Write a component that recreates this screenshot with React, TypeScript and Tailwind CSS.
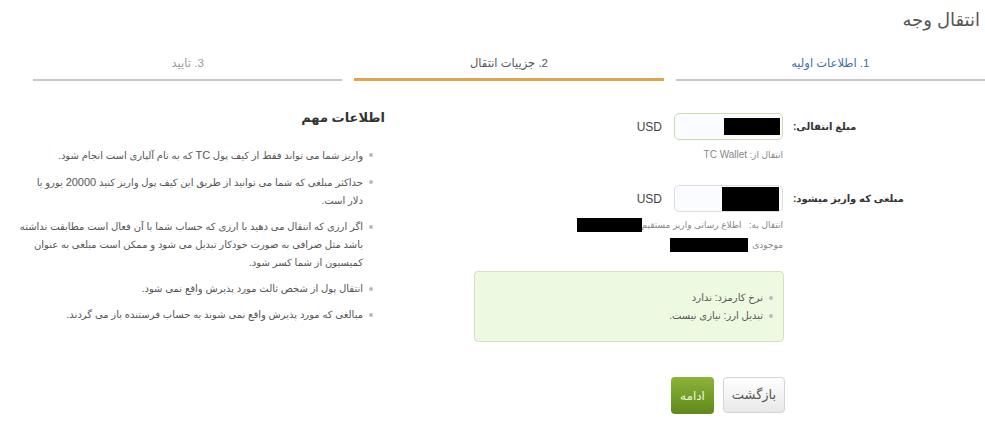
import React from "react";

function Bullet({ children, nowrap }: { children: React.ReactNode; nowrap?: boolean }) {
  return (
    <li className="flex items-start gap-[6px]">
      <span className="mt-[7px] w-[4px] h-[4px] rounded-full bg-[#bbbbbb] shrink-0" />
      <span className={nowrap ? "whitespace-nowrap" : ""}>{children}</span>
    </li>
  );
}

export default function App() {
  return (
    <div
      dir="rtl"
      className="w-[985px] h-[426px] bg-white text-[#555] overflow-hidden font-['Liberation_Sans','DejaVu_Sans',sans-serif]"
    >
      <h1 className="pr-[5px] pt-[8px] text-[18px] leading-[24px] text-[#555] font-normal">انتقال وجه</h1>

      <div className="grid grid-cols-3 gap-3 ml-[33px] mt-[23px] text-[11.5px] leading-[16px]">
        <div className="text-center pb-[8px] border-b-2 border-[#c8c8c8] text-[#3a6ea5]">1. اطلاعات اولیه</div>
        <div className="text-center pb-[7px] border-b-[3px] border-[#e3a445] text-[#555]">2. جزییات انتقال</div>
        <div className="text-center pb-[8px] border-b-2 border-[#c8c8c8] text-[#999]">3. تایید</div>
      </div>

      <div className="flex justify-between pl-[30px] mt-[27px]">
        {/* form */}
        <div className="w-[515px] pt-[5px]">
          <div className="flex items-center h-[27px]">
            <div className="w-[192px] text-left font-bold text-[10px] text-[#333]">مبلغ انتقالی:</div>
            <div className="mr-[10px] w-[109px] h-[27px] rounded-[5px] border border-[#cfdcb0] bg-[#fafcff] flex items-center pr-[2px]">
              <div className="w-[56px] h-[17px] bg-black" />
            </div>
            <div className="mr-[12px] text-[12px] text-[#444]">USD</div>
          </div>
          <div className="mr-[202px] mt-[8px] text-[9px] leading-[14px] text-[#888]">
            انتقال از: <span dir="ltr" className="text-[10px]">TC Wallet</span>
          </div>

          <div className="flex items-center h-[27px] mt-[23px]">
            <div className="w-[192px] text-left font-bold text-[10px] text-[#333]">مبلغی که واریز میشود:</div>
            <div className="mr-[10px] w-[109px] h-[27px] rounded-[5px] border border-[#dddddd] bg-[#fafcff] flex items-center pr-[3px]">
              <div className="w-[57px] h-[24px] bg-black" />
            </div>
            <div className="mr-[12px] text-[12px] text-[#444]">USD</div>
          </div>
          <div className="mr-[202px] mt-[6px] flex items-center text-[9px] leading-[14px] text-[#888]">
            <span>انتقال به:&nbsp;&nbsp; اطلاع رسانی واریز مستقیم</span>
            <span className="w-[65px] h-[14px] bg-black" />
          </div>
          <div className="mr-[202px] mt-[6px] flex items-center gap-[4px] text-[9px] leading-[14px] text-[#888]">
            <span>موجودی</span>
            <span className="w-[78px] h-[14px] bg-black" />
          </div>

          <div className="mr-[201px] mt-[19px] w-[310px] h-[71px] rounded-[4px] border border-[#d3e2c2] bg-[#eef9e1] pt-[17px] pr-[10px] text-[10px] leading-[18px] text-[#555]">
            <ul>
              <Bullet>نرخ کارمزد: ندارد</Bullet>
              <Bullet>تبدیل ارز: نیازی نیست.</Bullet>
            </ul>
          </div>

          <div className="mr-[200px] mt-[35px] flex gap-[9px]">
            <button className="w-[62px] h-[36px] rounded-[4px] border border-[#d4d4d4] bg-gradient-to-b from-[#ffffff] to-[#e8e8e8] text-[13px] text-[#555]">بازگشت</button>
            <button className="w-[43px] h-[37px] rounded-[4px] bg-gradient-to-b from-[#8db33a] to-[#5e8a1a] text-[12px] text-[#eef5dc]">ادامه</button>
          </div>
        </div>

        {/* info */}
        <div className="w-[360px]">
          <div className="pr-[5px] pt-[1px] text-[13px] leading-[18px] font-bold text-[#333]">اطلاعات مهم</div>
          <ul className="mt-[19px] pr-[17px] text-[10px] leading-[18px] text-[#555] flex flex-col gap-[8px]">
            <Bullet>واریز شما می تواند فقط از کیف پول <span className="text-[11px]">TC</span> که به نام آلپاری است انجام شود.</Bullet>
            <Bullet nowrap>حداکثر مبلغی که شما می توانید از طریق این کیف پول واریز کنید <span className="text-[11px]">20000</span> یورو یا<br />دلار است.</Bullet>
            <Bullet nowrap>اگر ارزی که انتقال می دهید با ارزی که حساب شما با آن فعال است مطابقت نداشته<br />باشد مثل صرافی به صورت خودکار تبدیل می شود و ممکن است مبلغی به عنوان<br />کمیسیون از شما کسر شود.</Bullet>
            <Bullet>انتقال پول از شخص ثالث مورد پذیرش واقع نمی شود.</Bullet>
            <Bullet>مبالغی که مورد پذیرش واقع نمی شوند به حساب فرستنده باز می گردند.</Bullet>
          </ul>
        </div>
      </div>
    </div>
  );
}
